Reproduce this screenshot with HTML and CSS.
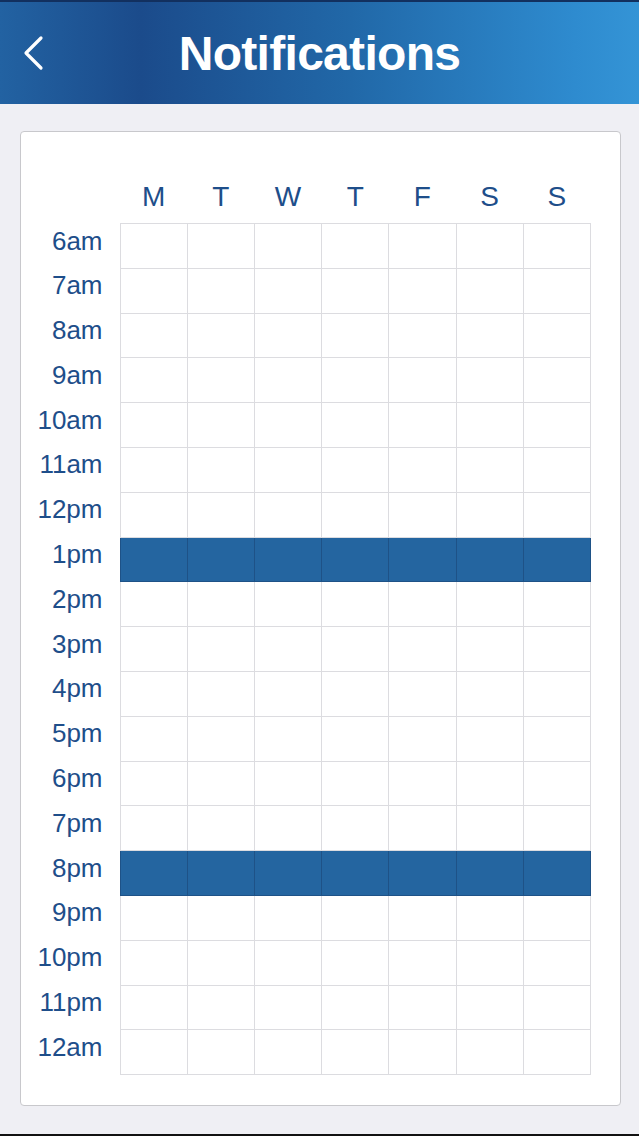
FILE: index.html
```html
<!DOCTYPE html>
<html>
<head>
  <link rel="stylesheet" href="styles.css">
</head>
<body>
  <div class="header">
    <button class="back" aria-label="Back">
      <svg width="24" height="36" viewBox="0 0 24 36">
        <polyline points="18,3 3,18 18,33" fill="none" stroke="#ffffff" stroke-width="3.2" stroke-linecap="round" stroke-linejoin="round"/>
      </svg>
    </button>
    <h1 class="title">Notifications</h1>
  </div>

  <div class="main">
    <div class="card">
      <table class="schedule">
        <thead>
          <tr>
            <th class="corner"></th>
            <th class="day">M</th>
            <th class="day">T</th>
            <th class="day">W</th>
            <th class="day">T</th>
            <th class="day">F</th>
            <th class="day">S</th>
            <th class="day">S</th>
          </tr>
        </thead>
        <tbody>
          <tr><th class="hour">6am</th><td></td><td></td><td></td><td></td><td></td><td></td><td></td></tr>
          <tr><th class="hour">7am</th><td></td><td></td><td></td><td></td><td></td><td></td><td></td></tr>
          <tr><th class="hour">8am</th><td></td><td></td><td></td><td></td><td></td><td></td><td></td></tr>
          <tr><th class="hour">9am</th><td></td><td></td><td></td><td></td><td></td><td></td><td></td></tr>
          <tr><th class="hour">10am</th><td></td><td></td><td></td><td></td><td></td><td></td><td></td></tr>
          <tr><th class="hour">11am</th><td></td><td></td><td></td><td></td><td></td><td></td><td></td></tr>
          <tr><th class="hour">12pm</th><td></td><td></td><td></td><td></td><td></td><td></td><td></td></tr>
          <tr class="on"><th class="hour">1pm</th><td></td><td></td><td></td><td></td><td></td><td></td><td></td></tr>
          <tr><th class="hour">2pm</th><td></td><td></td><td></td><td></td><td></td><td></td><td></td></tr>
          <tr><th class="hour">3pm</th><td></td><td></td><td></td><td></td><td></td><td></td><td></td></tr>
          <tr><th class="hour">4pm</th><td></td><td></td><td></td><td></td><td></td><td></td><td></td></tr>
          <tr><th class="hour">5pm</th><td></td><td></td><td></td><td></td><td></td><td></td><td></td></tr>
          <tr><th class="hour">6pm</th><td></td><td></td><td></td><td></td><td></td><td></td><td></td></tr>
          <tr><th class="hour">7pm</th><td></td><td></td><td></td><td></td><td></td><td></td><td></td></tr>
          <tr class="on"><th class="hour">8pm</th><td></td><td></td><td></td><td></td><td></td><td></td><td></td></tr>
          <tr><th class="hour">9pm</th><td></td><td></td><td></td><td></td><td></td><td></td><td></td></tr>
          <tr><th class="hour">10pm</th><td></td><td></td><td></td><td></td><td></td><td></td><td></td></tr>
          <tr><th class="hour">11pm</th><td></td><td></td><td></td><td></td><td></td><td></td><td></td></tr>
          <tr><th class="hour">12am</th><td></td><td></td><td></td><td></td><td></td><td></td><td></td></tr>
        </tbody>
      </table>
    </div>
  </div>

  <div class="bottom-line"></div>
</body>
</html>
```

FILE: styles.css
```css
:root {
  --page: #efeff4;
  --ink: #1e4e8a;
  --grid: #dcdce0;
  --band: #2465a0;
  --band-line: #1e5287;
}

* {
  box-sizing: border-box;
}

body {
  margin: 0;
  width: 639px;
  height: 1136px;
  display: flex;
  flex-direction: column;
  background: var(--page);
  font-family: "Liberation Sans", Arial, sans-serif;
  overflow: hidden;
}

.header {
  height: 104px;
  flex-shrink: 0;
  display: flex;
  align-items: center;
  justify-content: center;
  position: relative;
  border-top: 2px solid #12305f;
  background: linear-gradient(90deg, #2262a2 0%, #1b4b8b 22%, #2168a8 55%, #2e8bcf 90%, #3494d6 100%);
}

.back {
  position: absolute;
  left: 23px;
  top: 33px;
  padding: 0;
  border: 0;
  background: transparent;
  cursor: pointer;
}

.back svg {
  display: block;
}

.title {
  margin: 0;
  color: #ffffff;
  font-size: 48px;
  font-weight: 700;
  letter-spacing: -0.7px;
  line-height: 1;
  padding-top: 1px;
}

.main {
  flex: 1;
  padding: 27px 18px 0 20px;
}

.card {
  height: 975px;
  background: #ffffff;
  border: 1px solid #c8c8cc;
  border-radius: 4px;
  padding-top: 40px;
}

.schedule {
  border-collapse: collapse;
  table-layout: fixed;
  width: 570px;
}

.corner {
  width: 99px;
}

.day {
  height: 51px;
  padding: 0 0 2px;
  line-height: 49px;
  font-size: 28px;
  font-weight: 400;
  color: var(--ink);
  text-align: center;
  vertical-align: top;
}

.hour {
  height: 44.8px;
  padding: 2px 17px 0 0;
  line-height: 30px;
  font-size: 26px;
  font-weight: 400;
  color: var(--ink);
  text-align: right;
  vertical-align: top;
}

.schedule td {
  border: 1px solid var(--grid);
  padding: 0;
}

.schedule tr.on td {
  background: var(--band);
  border-color: var(--band-line);
}

.bottom-line {
  height: 2px;
  flex-shrink: 0;
  background: #111111;
}
```
